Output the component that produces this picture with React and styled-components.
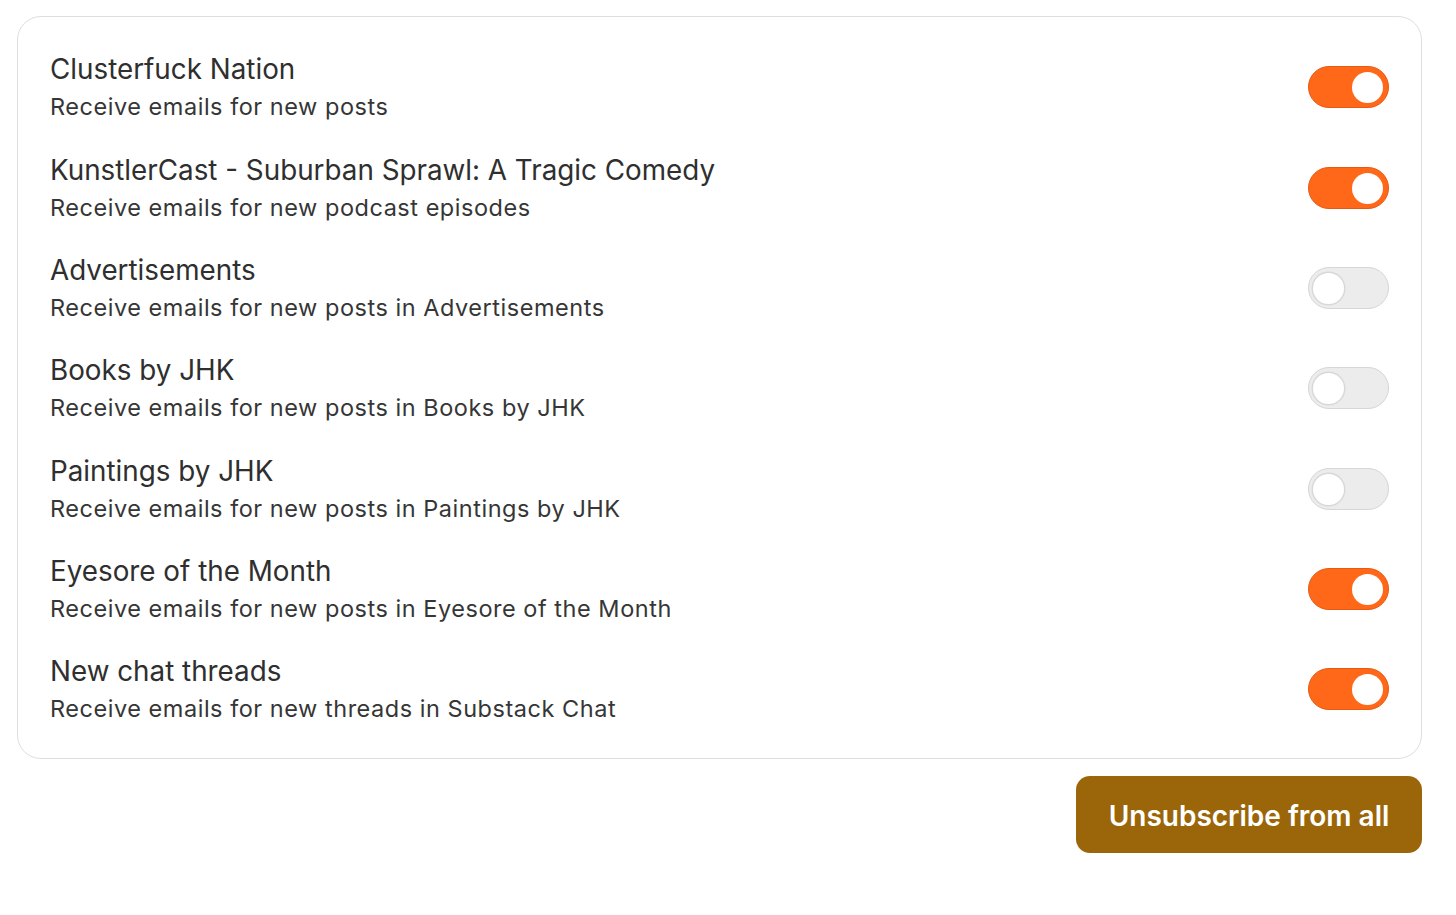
import React, { useState } from "react";
import styled, { createGlobalStyle, css } from "styled-components";

const GlobalStyle = createGlobalStyle`
  body {
    margin: 0;
    background: #ffffff;
    font-family: Inter, "Noto Sans", "Liberation Sans", sans-serif;
    -webkit-font-smoothing: antialiased;
  }
`;

const Page = styled.div`
  padding: 16px 34px 40px 17px;
  display: flex;
  flex-direction: column;
  align-items: stretch;
`;

const Card = styled.div`
  border: 1px solid #dedede;
  border-radius: 24px;
  padding: 21px 32px 17px 32px;
  display: flex;
  flex-direction: column;
`;

const Row = styled.div`
  display: flex;
  align-items: center;
  justify-content: space-between;
  padding: 12.2px 0;
`;

const Texts = styled.div`
  display: flex;
  flex-direction: column;
`;

const Title = styled.div`
  font-size: 27.8px;
  line-height: 38px;
  color: #2f2f2f;
`;

const Subtitle = styled.div`
  font-size: 23.5px;
  line-height: 38px;
  color: #363636;
  letter-spacing: 0.53px;
`;

const Track = styled.button`
  position: relative;
  width: 81px;
  height: 42px;
  border-radius: 21px;
  padding: 0;
  margin-bottom: 2px;
  cursor: pointer;
  flex-shrink: 0;
  ${(p) =>
    p.on
      ? css`
          background: #ff6719;
          border: 1px solid #e85a10;
        `
      : css`
          background: #ececec;
          border: 1.5px solid #d6d6d6;
        `}
`;

const Knob = styled.span`
  position: absolute;
  top: 5px;
  width: 31px;
  height: 31px;
  border-radius: 50%;
  background: #ffffff;
  ${(p) =>
    p.on
      ? css`
          right: 5px;
        `
      : css`
          left: 4px;
          box-shadow: 0 0 0 1.5px #d8d8d8;
        `}
`;

const Footer = styled.div`
  display: flex;
  justify-content: flex-end;
  margin-top: 17px;
`;

const UnsubscribeButton = styled.button`
  width: 346px;
  height: 77px;
  border: none;
  border-radius: 14px;
  padding: 4px 0 0;
  background: #9b6609;
  color: #ffffff;
  font-family: Inter, "Noto Sans", "Liberation Sans", sans-serif;
  font-size: 28px;
  font-weight: 600;
  cursor: pointer;
`;

const initial = [
  { title: "Clusterfuck Nation", sub: "Receive emails for new posts", on: true },
  {
    title: "KunstlerCast - Suburban Sprawl: A Tragic Comedy",
    sub: "Receive emails for new podcast episodes",
    on: true
  },
  { title: "Advertisements", sub: "Receive emails for new posts in Advertisements", on: false },
  { title: "Books by JHK", sub: "Receive emails for new posts in Books by JHK", on: false },
  { title: "Paintings by JHK", sub: "Receive emails for new posts in Paintings by JHK", on: false },
  { title: "Eyesore of the Month", sub: "Receive emails for new posts in Eyesore of the Month", on: true },
  { title: "New chat threads", sub: "Receive emails for new threads in Substack Chat", on: true }
];

const Toggle = ({ on, onClick }) => (
  <Track on={on ? 1 : 0} onClick={onClick} aria-pressed={on}>
    <Knob on={on ? 1 : 0} />
  </Track>
);

const App = () => {
  const [items, setItems] = useState(initial);

  const toggle = (i) =>
    setItems((prev) => prev.map((it, j) => (j === i ? { ...it, on: !it.on } : it)));

  return (
    <Page>
      <GlobalStyle />
      <Card>
        {items.map((it, i) => (
          <Row key={it.title}>
            <Texts>
              <Title>{it.title}</Title>
              <Subtitle>{it.sub}</Subtitle>
            </Texts>
            <Toggle on={it.on} onClick={() => toggle(i)} />
          </Row>
        ))}
      </Card>
      <Footer>
        <UnsubscribeButton>Unsubscribe from all</UnsubscribeButton>
      </Footer>
    </Page>
  );
};

export default App;
